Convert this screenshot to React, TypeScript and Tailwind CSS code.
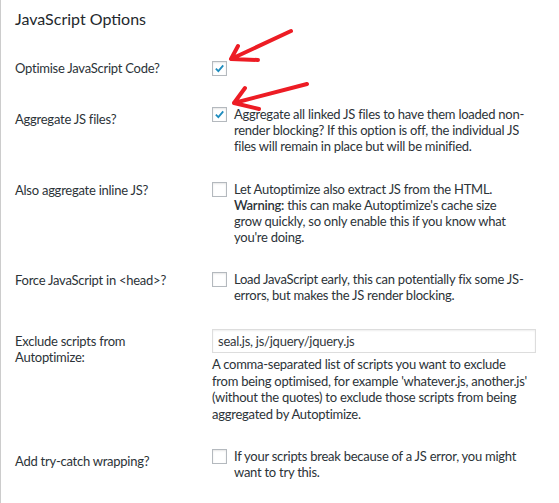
import type { ReactNode } from "react";

const font = { fontFamily: "Lato, 'Open Sans', sans-serif" };

function Checkbox({ checked = false }: { checked?: boolean }) {
  return (
    <span className="mt-[1px] flex h-[15px] w-[15px] shrink-0 items-center justify-center border border-[#b4b9be] bg-white shadow-[inset_0_1px_2px_rgba(0,0,0,0.1)]">
      {checked && (
        <svg viewBox="0 0 16 16" className="h-[13px] w-[13px]">
          <path
            d="M3.5 8.2 L6.6 11.2 L12.6 4.2"
            fill="none"
            stroke="#1e8cbe"
            strokeWidth="2.2"
            strokeLinejoin="miter"
          />
        </svg>
      )}
    </span>
  );
}

function Row({
  label,
  labelPad,
  className,
  children,
}: {
  label: ReactNode;
  labelPad: string;
  className: string;
  children: ReactNode;
}) {
  return (
    <div className={`flex items-start ${className}`}>
      <div className={`w-[197px] shrink-0 whitespace-nowrap ${labelPad}`}>{label}</div>
      <div className="w-[326px]">{children}</div>
    </div>
  );
}

function CheckRow({ checked, children }: { checked?: boolean; children?: ReactNode }) {
  return (
    <div className="flex items-start gap-[7px]">
      <Checkbox checked={checked} />
      {children && <p className="w-[304px] whitespace-nowrap">{children}</p>}
    </div>
  );
}

export default function App() {
  return (
    <div
      className="relative h-[503px] w-[559px] overflow-hidden border-l border-[#cccccc] bg-white pl-[14px] text-[13px] leading-4 tracking-[-0.25px] text-[#2c3338]"
      style={font}
    >
      <h2 className="pt-[9px] text-[16px] leading-5 tracking-normal text-[#23282d]">JavaScript Options</h2>

      <Row label="Optimise JavaScript Code?" labelPad="pt-0" className="mt-[31px]">
        <CheckRow checked />
      </Row>

      <Row label="Aggregate JS files?" labelPad="pt-[5px]" className="mt-[30px]">
        <CheckRow checked>
          Aggregate all linked JS files to have them loaded non-
          <br />
          render blocking? If this option is off, the individual JS
          <br />
          files will remain in place but will be minified.
        </CheckRow>
      </Row>

      <Row label="Also aggregate inline JS?" labelPad="pt-[1px]" className="mt-[27px]">
        <CheckRow>
          Let Autoptimize also extract JS from the HTML.
          <br />
          <span className="font-semibold">Warning:</span> this can make Autoptimize's cache size
          <br />
          grow quickly, so only enable this if you know what
          <br />
          you're doing.
        </CheckRow>
      </Row>

      <Row label="Force JavaScript in <head>?" labelPad="pt-[1px]" className="mt-[26px]">
        <CheckRow>
          Load JavaScript early, this can potentially fix some JS-
          <br />
          errors, but makes the JS render blocking.
        </CheckRow>
      </Row>

      <Row
        label={
          <>
            Exclude scripts from
            <br />
            Autoptimize:
          </>
        }
        labelPad="pt-[4px]"
        className="mt-[26px]"
      >
        <input
          type="text"
          defaultValue="seal.js, js/jquery/jquery.js"
          className="block h-[24px] w-[324px] border border-[#dddddd] bg-white px-[5px] text-[13px] tracking-[-0.25px] text-[#32373c] shadow-[inset_0_1px_2px_rgba(0,0,0,0.07)] outline-none"
          style={font}
        />
        <p className="mt-[3px] w-[326px] whitespace-nowrap leading-[16.6px]">
          A comma-separated list of scripts you want to exclude
          <br />
          from being optimised, for example 'whatever.js, another.js'
          <br />
          (without the quotes) to exclude those scripts from being
          <br />
          aggregated by Autoptimize.
        </p>
      </Row>

      <Row label="Add try-catch wrapping?" labelPad="pt-[5px]" className="mt-[26px]">
        <CheckRow>
          If your scripts break because of a JS error, you might
          <br />
          want to try this.
        </CheckRow>
      </Row>

      {/* red annotation arrows */}
      <svg className="pointer-events-none absolute left-0 top-0" width="559" height="503">
        <g fill="none" stroke="#ed1c24" strokeWidth="4" strokeLinecap="round" strokeLinejoin="round">
          <path d="M290 31 L230 59 M237 46 L230 59 L257 60" />
          <path d="M306 84 L233 103 M244 88 L233 103 L258 109" />
        </g>
      </svg>
    </div>
  );
}
